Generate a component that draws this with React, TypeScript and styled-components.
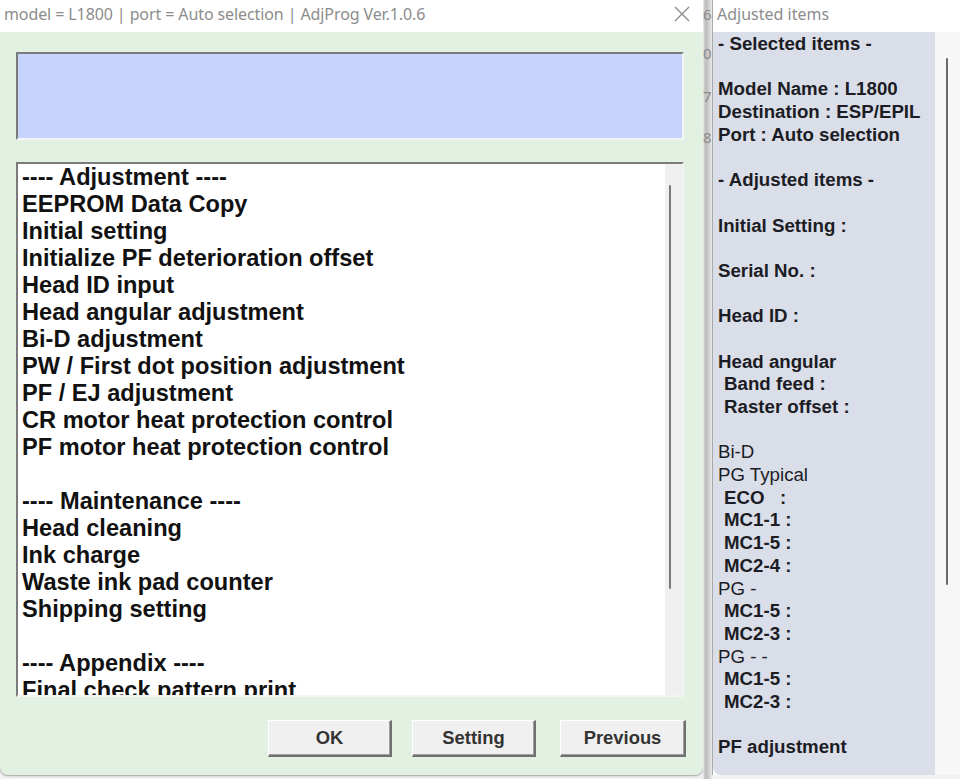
import styled, { createGlobalStyle } from 'styled-components';

const GlobalStyle = createGlobalStyle`
    html, body {
        margin: 0;
        padding: 0;
        width: 960px;
        height: 779px;
        overflow: hidden;
        background: #f1f1f1;
    }
    * {
        box-sizing: border-box;
    }
`;

interface ListLine {
    text: string;
}

const menuLines: ListLine[] = [
    { text: '---- Adjustment ----' },
    { text: 'EEPROM Data Copy' },
    { text: 'Initial setting' },
    { text: 'Initialize PF deterioration offset' },
    { text: 'Head ID input' },
    { text: 'Head angular adjustment' },
    { text: 'Bi-D adjustment' },
    { text: 'PW / First dot position adjustment' },
    { text: 'PF / EJ adjustment' },
    { text: 'CR motor heat protection control' },
    { text: 'PF motor heat protection control' },
    { text: '' },
    { text: '---- Maintenance ----' },
    { text: 'Head cleaning' },
    { text: 'Ink charge' },
    { text: 'Waste ink pad counter' },
    { text: 'Shipping setting' },
    { text: '' },
    { text: '---- Appendix ----' },
    { text: 'Final check pattern print' },
];

interface InfoLine {
    text: string;
    indent?: boolean;
    light?: boolean;
}

const infoLines: InfoLine[] = [
    { text: '- Selected items -' },
    { text: '' },
    { text: 'Model Name : L1800' },
    { text: 'Destination : ESP/EPIL' },
    { text: 'Port : Auto selection' },
    { text: '' },
    { text: '- Adjusted items -' },
    { text: '' },
    { text: 'Initial Setting :' },
    { text: '' },
    { text: 'Serial No. :' },
    { text: '' },
    { text: 'Head ID :' },
    { text: '' },
    { text: 'Head angular' },
    { text: 'Band feed :', indent: true },
    { text: 'Raster offset :', indent: true },
    { text: '' },
    { text: 'Bi-D', light: true },
    { text: 'PG Typical', light: true },
    { text: 'ECO\u00a0\u00a0\u00a0:', indent: true },
    { text: 'MC1-1 :', indent: true },
    { text: 'MC1-5 :', indent: true },
    { text: 'MC2-4 :', indent: true },
    { text: 'PG -', light: true },
    { text: 'MC1-5 :', indent: true },
    { text: 'MC2-3 :', indent: true },
    { text: 'PG - -', light: true },
    { text: 'MC1-5 :', indent: true },
    { text: 'MC2-3 :', indent: true },
    { text: '' },
    { text: 'PF adjustment' },
];

const backDigits = [
    { d: '6', top: 5 },
    { d: '0', top: 21 },
    { d: '7', top: 25 },
    { d: '8', top: 23 },
];

const App = () => {
    return (
        <>
            <GlobalStyle />
            <Desktop>
                <MainWindow>
                    <TitleBar>
                        <TitleText>
                            model = L1800 | port = Auto selection | AdjProg Ver.1.0.6
                        </TitleText>
                        <CloseButton aria-label='close'>
                            <svg width='16' height='16' viewBox='0 0 16 16'>
                                <path
                                    d='M1 1 L15 15 M15 1 L1 15'
                                    stroke='#8a8a8a'
                                    strokeWidth='1.3'
                                    fill='none'
                                />
                            </svg>
                        </CloseButton>
                    </TitleBar>
                    <MainBody>
                        <StatusBox />
                        <ListBox>
                            <ListItems>
                                {menuLines.map((line, i) => (
                                    <ListRow key={i}>{line.text || '\u00a0'}</ListRow>
                                ))}
                            </ListItems>
                            <ScrollTrack>
                                <ScrollThumb />
                            </ScrollTrack>
                        </ListBox>
                        <ButtonRow>
                            <PushButton>OK</PushButton>
                            <PushButton>Setting</PushButton>
                            <PushButton $wide>Previous</PushButton>
                        </ButtonRow>
                    </MainBody>
                </MainWindow>

                <BackStrip>
                    {backDigits.map((b, i) => (
                        <BackDigit key={i} $top={b.top}>
                            {b.d}
                        </BackDigit>
                    ))}
                </BackStrip>

                <SideWindow>
                    <SideTitle>Adjusted items</SideTitle>
                    <SideBody>
                        <InfoPanel>
                            {infoLines.map((line, i) => (
                                <InfoRow key={i} $indent={line.indent} $light={line.light}>
                                    {line.text || '\u00a0'}
                                </InfoRow>
                            ))}
                        </InfoPanel>
                        <SideScroll>
                            <SideThumb />
                        </SideScroll>
                    </SideBody>
                </SideWindow>
            </Desktop>
        </>
    );
};

const Desktop = styled.div`
    display: flex;
    width: 960px;
    height: 779px;
    overflow: hidden;
`;

const MainWindow = styled.div`
    width: 703px;
    height: 775px;
    display: flex;
    flex-direction: column;
    background: #e3f1e2;
    border-radius: 0 0 8px 8px;
    box-shadow: 0 1px 2px rgba(0, 0, 0, 0.35);
    overflow: hidden;
    flex-shrink: 0;
`;

const TitleBar = styled.div`
    height: 32px;
    background: #ffffff;
    display: flex;
    align-items: center;
    justify-content: space-between;
    padding: 0 13px 0 4px;
`;

const TitleText = styled.span`
    font-family: 'Noto Sans', 'Open Sans', sans-serif;
    font-size: 16px;
    color: #8c8c8c;
    letter-spacing: -0.1px;
    margin-top: -4px;
`;

const CloseButton = styled.div`
    width: 16px;
    height: 16px;
    display: flex;
    margin-top: -4px;
`;

const MainBody = styled.div`
    flex: 1;
    display: flex;
    flex-direction: column;
    padding: 20px 19px 0 16px;
`;

const SunkenBox = styled.div`
    border-style: solid;
    border-width: 2px;
    border-color: #7b7b7b #f4f4f4 #f4f4f4 #7b7b7b;
`;

const StatusBox = styled(SunkenBox)`
    height: 88px;
    background: #c6d3fb;
`;

const ListBox = styled(SunkenBox)`
    margin-top: 22px;
    height: 535px;
    background: #ffffff;
    display: flex;
    overflow: hidden;
`;

const ListItems = styled.div`
    flex: 1;
    padding: 0 0 0 4px;
    overflow: hidden;
`;

const ListRow = styled.div`
    font-family: 'Liberation Sans', Arial, sans-serif;
    font-size: 23.6px;
    line-height: 27px;
    height: 27px;
    font-weight: bold;
    color: #111111;
    white-space: pre;
`;

const ScrollTrack = styled.div`
    width: 17px;
    background: #f0f0f0;
    padding: 21px 0 0 4px;
`;

const ScrollThumb = styled.div`
    width: 2px;
    height: 404px;
    background: #7a7a7a;
    border-radius: 1px;
`;

const ButtonRow = styled.div`
    display: flex;
    justify-content: flex-end;
    gap: 20px;
    margin: 23px -2px 0 0;
`;

const PushButton = styled.button<{ $wide?: boolean }>`
    width: ${(p) => (p.$wide ? '126px' : '124px')};
    height: 37px;
    background: #f0f0f0;
    border-style: solid;
    border-width: 1px 2px 2px 1px;
    border-color: #ffffff #6f6f6f #6f6f6f #ffffff;
    box-shadow: inset -1px -1px 0 #a0a0a0;
    font-family: 'Liberation Sans', Arial, sans-serif;
    font-size: 18.4px;
    font-weight: bold;
    color: #333333;
    padding: 0 0 1px 0;
    &:nth-child(2) {
        margin-right: 4px;
    }
`;

const BackStrip = styled.div`
    width: 9px;
    height: 779px;
    flex-shrink: 0;
    background: linear-gradient(to right, #f4f4f4 0, #cfcfcf 1px, #bdbdbd 3px, #cfcfcf 6px, #e6e6e6 8px);
    display: flex;
    flex-direction: column;
    overflow: hidden;
`;

const BackDigit = styled.span<{ $top: number }>`
    font-family: 'Noto Sans', sans-serif;
    font-size: 15px;
    line-height: 18px;
    color: #8a8a8a;
    margin-top: ${(p) => p.$top}px;
`;

const SideWindow = styled.div`
    flex: 1;
    display: flex;
    flex-direction: column;
    background: #ffffff;
    border-left: 1px solid #a9a9a9;
    height: 775px;
`;

const SideTitle = styled.div`
    height: 32px;
    padding: 3px 0 0 4px;
    font-family: 'Noto Sans', 'Open Sans', sans-serif;
    font-size: 16px;
    color: #8c8c8c;
`;

const SideBody = styled.div`
    flex: 1;
    display: flex;
`;

const InfoPanel = styled.div`
    width: 222px;
    background: #d9dee9;
    padding: 1px 0 0 5px;
    border-radius: 0 0 0 8px;
    overflow: hidden;
`;

const InfoRow = styled.div<{ $indent?: boolean; $light?: boolean }>`
    font-family: 'Liberation Sans', Arial, sans-serif;
    font-size: 18.7px;
    line-height: 22.7px;
    height: 22.7px;
    font-weight: ${(p) => (p.$light ? 'normal' : 'bold')};
    color: #1c1c24;
    padding-left: ${(p) => (p.$indent ? '6px' : '0')};
    white-space: pre;
`;

const SideScroll = styled.div`
    flex: 1;
    background: #f7f7f7;
    padding: 26px 0 0 11px;
`;

const SideThumb = styled.div`
    width: 2px;
    height: 527px;
    background: #6c6c6c;
    border-radius: 1px;
`;

export default App;
